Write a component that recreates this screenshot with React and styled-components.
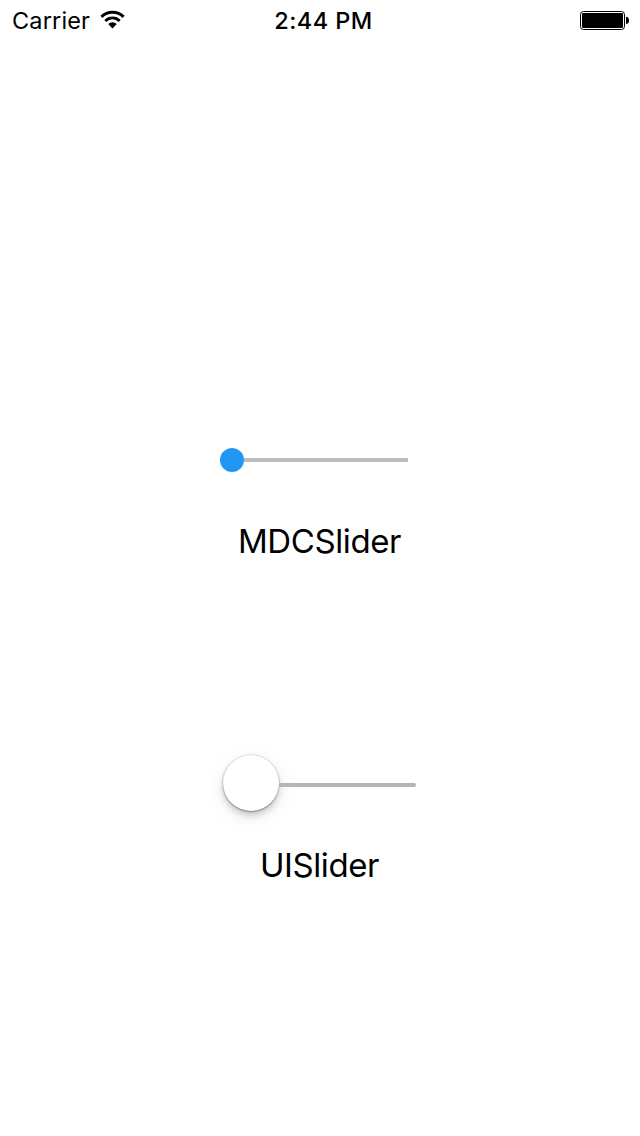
import React from "react";
import styled, { createGlobalStyle } from "styled-components";

const GlobalStyle = createGlobalStyle`
  * { box-sizing: border-box; }
  body { margin: 0; background: #fff; }
`;

const Screen = styled.main`
  width: 640px;
  height: 1136px;
  display: flex;
  flex-direction: column;
  overflow: hidden;
  background: #fff;
  color: #000;
  font-family: Inter, "Liberation Sans", sans-serif;
`;

const StatusBar = styled.header`
  height: 40px;
  padding: 0 11px 0 12px;
  display: grid;
  grid-template-columns: 1fr auto 1fr;
  align-items: center;
  font-size: 23.5px;
  line-height: 38px;
`;

const CarrierGroup = styled.div`
  display: flex;
  align-items: center;
  gap: 10px;
`;

const Carrier = styled.span`
  width: 78px;
  padding-top: 2px;
  letter-spacing: 0.15px;
  white-space: nowrap;
`;

const Clock = styled.time`
  font-weight: 500;
  letter-spacing: 0.45px;
  padding: 2px 0 0 6px;
`;

const BatteryIcon = styled.svg`
  display: block;
  justify-self: end;
`;

const SliderGroup = styled.section`
  display: flex;
  flex-direction: column;
  padding-left: 220px;
  margin-top: ${(p) => p.$top}px;
`;

const Slider = styled.div`
  display: flex;
  align-items: center;
  height: ${(p) => p.$height}px;
  padding-left: ${(p) => p.$inset}px;
`;

const MaterialThumb = styled.span`
  width: 24px;
  height: 24px;
  border-radius: 50%;
  background: #2196f3;
`;

const NativeThumb = styled.span`
  width: 56px;
  height: 56px;
  margin-bottom: 4px;
  border-radius: 50%;
  background: #fff;
  box-shadow: 0 0 0 1px rgba(0, 0, 0, 0.08), 0 1px 2px rgba(0, 0, 0, 0.3),
    0 5px 6px rgba(0, 0, 0, 0.16), 0 5px 22px rgba(0, 0, 0, 0.08);
`;

const Track = styled.span`
  width: ${(p) => p.$width}px;
  height: 4px;
  background: ${(p) => p.$color};
  border-radius: ${(p) => (p.$rounded ? "0 2px 2px 0" : "0")};
`;

const Label = styled.span`
  width: 199px;
  height: 40px;
  margin-top: ${(p) => p.$top}px;
  text-align: center;
  font-size: 33px;
  line-height: 40px;
  letter-spacing: -0.4px;
`;

export default function App() {
  return (
    <>
      <GlobalStyle />
      <Screen>
        <StatusBar>
          <CarrierGroup>
            <Carrier>Carrier</Carrier>
            <svg width="26" height="20" viewBox="0 0 26 20" aria-label="Wi-Fi">
              <path d="M1.4 6.8A16 16 0 0 1 23.6 6.8" fill="none" stroke="#000" strokeWidth="3" />
              <path d="M5.3 10.9A10.3 10.3 0 0 1 19.7 10.9" fill="none" stroke="#000" strokeWidth="2.8" />
              <path d="M8.2 14A6 6 0 0 1 16.8 14L12.5 18.4Z" />
            </svg>
          </CarrierGroup>
          <Clock>2:44 PM</Clock>
          <BatteryIcon width="49" height="20" viewBox="0 0 49 20" aria-label="Battery full">
            <rect x="0.5" y="1.5" width="44" height="18" rx="3" fill="#fff" stroke="#000" />
            <rect x="2" y="3" width="41" height="15" rx="1.2" />
            <path d="M46 6.8Q49 7.1 49 10.4T46 14Z" />
          </BatteryIcon>
        </StatusBar>
        <SliderGroup $top={408}>
          <Slider $height={24} $inset={0}>
            <MaterialThumb />
            <Track $width={164} $color="#bdbdbd" />
          </Slider>
          <Label $top={49}>MDCSlider</Label>
        </SliderGroup>
        <SliderGroup $top={194}>
          <Slider $height={60} $inset={3}>
            <NativeThumb />
            <Track $width={137} $color="#b5b5b5" $rounded />
          </Slider>
          <Label $top={30}>UISlider</Label>
        </SliderGroup>
      </Screen>
    </>
  );
}
